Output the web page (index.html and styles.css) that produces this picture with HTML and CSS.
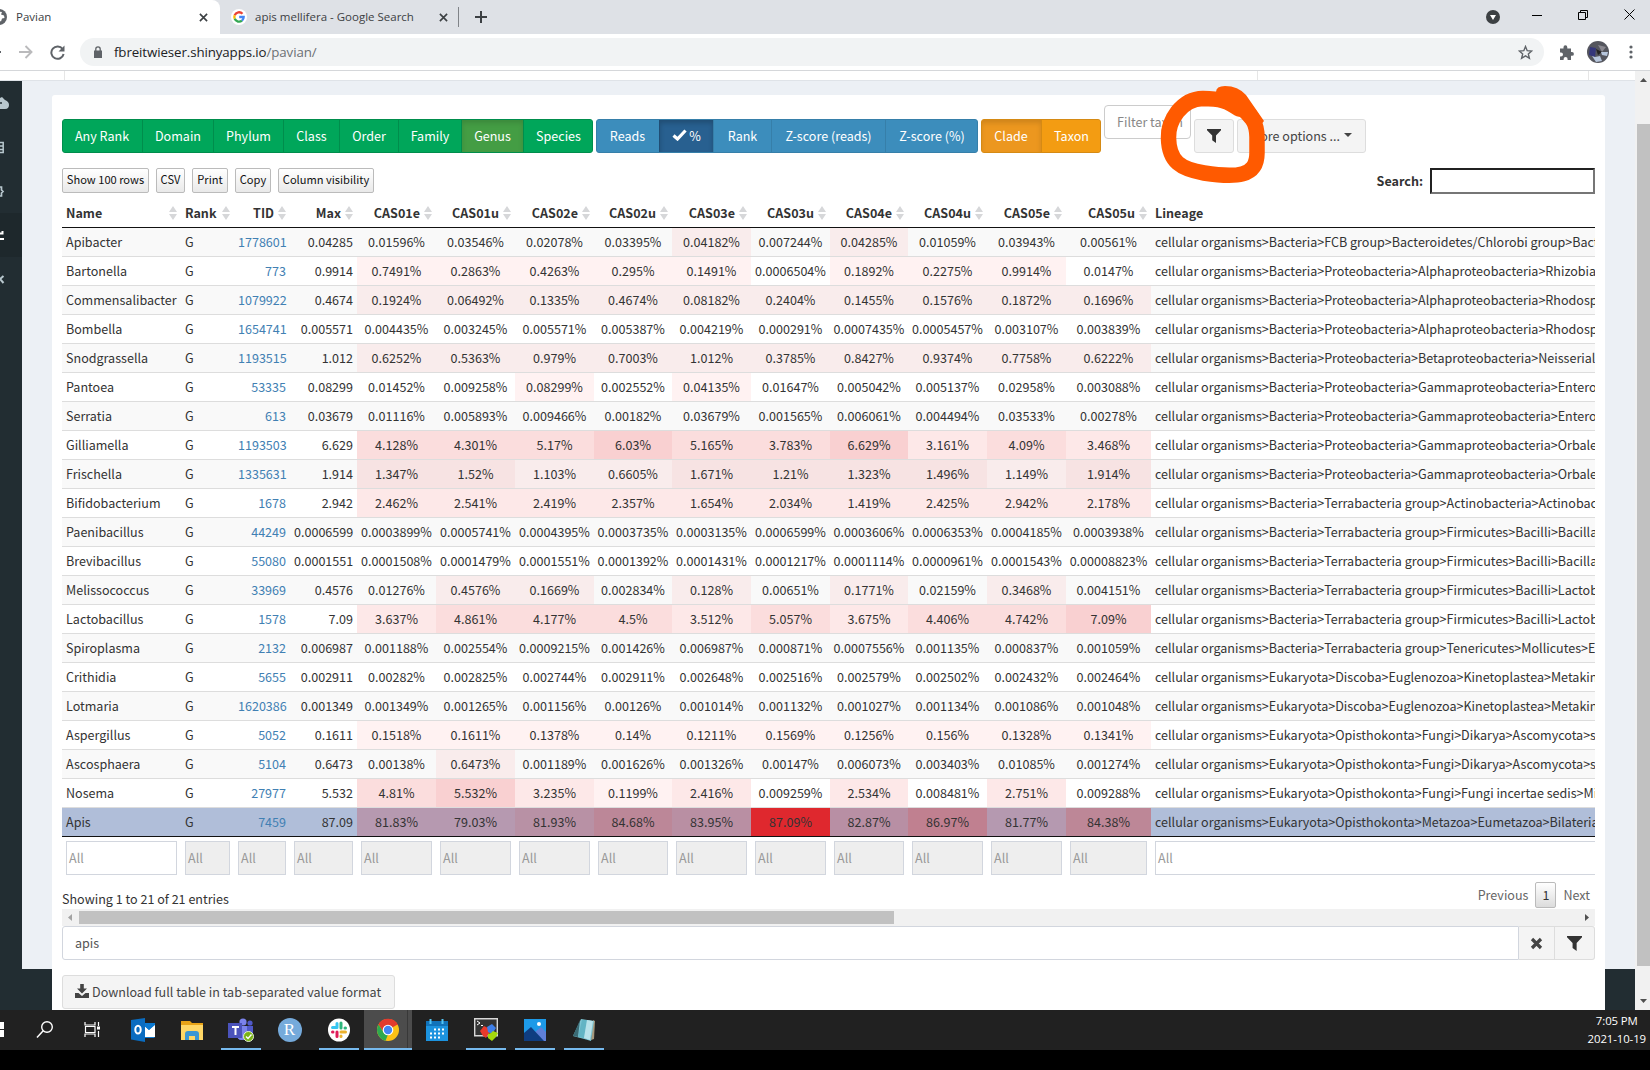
FILE: index.html
```html
<!DOCTYPE html>
<html lang="en">
<head>
<meta charset="utf-8">
<title>Pavian</title>
<link rel="stylesheet" href="styles.css">
</head>
<body>
<svg class="defs" width="0" height="0">
  <symbol id="funnel" viewBox="0 0 14 14"><path d="M0 0h14v1.2L9 6.6V14L5.2 11.2V6.6L0 1.2z" fill="currentColor"/></symbol>
  <symbol id="cross" viewBox="0 0 10 10"><path d="M1 1l8 8M9 1L1 9" stroke="currentColor" stroke-width="1.8" fill="none"/></symbol>
</svg>
<div class="screen">
  <header class="tabs">
    <div class="tab tab-active">
      <svg class="globe" width="16" height="16" viewBox="0 0 16 16"><circle cx="8" cy="8" r="8" fill="#5f6368"/><path d="M8 2.500l3 .5-1 2.500 3 1 .500 2.500-2.500.5-1 3-3-1.500-2-3 2-2z" fill="#fff"/></svg>
      <span class="tab-title title-a">Pavian</span>
      <svg class="tab-x" width="9" height="9"><use href="#cross"/></svg>
    </div>
    <div class="tab tab-google">
      <svg width="16" height="16" viewBox="0 0 16 16"><circle cx="8" cy="8" r="8" fill="#fff"/><g fill="none" stroke-width="2.3"><path d="M3.7 6.2A4.7 4.7 0 0 1 11.5 4.8" stroke="#ea4335"/><path d="M3.7 6.2a4.7 4.7 0 0 0 0 3.6" stroke="#fbbc05"/><path d="M3.7 9.8A4.7 4.7 0 0 0 11 11.6" stroke="#34a853"/><path d="M11 11.6A4.7 4.7 0 0 0 12.7 8H8.2" stroke="#4285f4"/></g></svg>
      <span class="tab-title title-b">apis mellifera - Google Search</span>
      <svg class="tab-x" width="9" height="9"><use href="#cross"/></svg>
    </div>
    <span class="tab-sep"></span>
    <svg class="plus" width="12" height="12"><path d="M6 0v12M0 6h12" stroke="#3c4043" stroke-width="2"/></svg>
    <div class="win">
      <svg width="14" height="14" viewBox="0 0 14 14"><circle cx="7" cy="7" r="7" fill="#3c4043"/><path d="M4 5h6L7 10z" fill="#fff"/></svg>
      <svg width="10" height="10"><path d="M0 5.5h10" stroke="#000"/></svg>
      <svg width="10" height="10"><path d="M.5 2.5h7v7h-7zM2.500 2.500v-2h7v7h-2" fill="none" stroke="#000"/></svg>
      <svg width="11" height="11"><path d="M.5.5l10 10M10.500.5l-10 10" stroke="#000"/></svg>
    </div>
  </header>
  <nav class="addressbar">
    <svg class="back" width="8" height="14"><path d="M0 7h1" stroke="#5f6368" stroke-width="2"/></svg>
    <svg class="fwd" width="14" height="14" viewBox="0 0 14 14"><path d="M0 7h12M6.500 1l6 6-6 6" fill="none" stroke="#bababc" stroke-width="1.900"/></svg>
    <svg class="reload" width="15" height="15" viewBox="0 0 15 15"><path d="M12.600 4A6.200 6.200 0 1 0 13.600 9" fill="none" stroke="#5f6368" stroke-width="2"/><path d="M14.500.5v6h-6z" fill="#5f6368"/></svg>
    <div class="omnibox">
      <svg width="8" height="12" viewBox="0 0 8 12"><path d="M0 4.500h8V12H0z" fill="#5f6368"/><path d="M1.800 5V3a2.200 2.200 0 0 1 4.400 0v2" fill="none" stroke="#5f6368" stroke-width="1.300"/></svg>
      <span class="url">fbreitwieser.shinyapps.io<i>/pavian/</i></span>
      <svg class="star" width="15" height="15" viewBox="0 0 15 15"><path d="M7.500 1.500l1.700 4.200 4.500.3-3.400 2.900 1.100 4.400-3.900-2.400-3.900 2.400 1.100-4.400L1.300 6l4.500-.3z" fill="none" stroke="#5f6368" stroke-width="1.400"/></svg>
    </div>
    <svg class="puzzle" width="15" height="15" viewBox="0 0 15 15"><path d="M1 3.500h3.500v-1.300a1.900 1.900 0 0 1 3.800 0v1.300H12v3.500h1a1.900 1.900 0 0 1 0 3.800h-1V15H8.600v-1a2 2 0 0 0-4 0v1H1v-3.600h1a2 2 0 0 0 0-4H1z" fill="#5f6368"/></svg>
    <svg class="avatar" width="22" height="22" viewBox="0 0 22 22"><circle cx="11" cy="11" r="11" fill="#55565e"/><path d="M3 6l6 1-1 9-6-2z" fill="#34367a"/><path d="M11 4l8 2-4 5z" fill="#8a8890"/><path d="M9 8l6 3-4 3z" fill="#222"/><path d="M14 11h7l-1 4-5-1zM5 15l3 1 5-1 2 5-6 1z" fill="#b7c6dc"/></svg>
    <svg class="dots" width="4" height="14"><circle cx="2" cy="2" r="1.600"/><circle cx="2" cy="7" r="1.600"/><circle cx="2" cy="12" r="1.600"/></svg>
  </nav>

  <div class="page">
    <div class="view">
      <div class="topstrip"><span class="ts-a"></span><span class="ts-b"></span><span class="ts-c"></span></div>
      <div class="body">
        <aside class="sidebar">
          <div class="side"><svg width="9" height="13"><path d="M0 1l2-1 3 3c3 1 4 3 4 5s-1 4-4 4H0z" fill="#b8c7ce"/><circle cx="1" cy="6" r="1" fill="#222d32"/></svg></div>
          <div class="side"><svg width="9" height="13"><path d="M0 1.500h3.200v10H0M0 5h3M0 8.500h3" fill="none" stroke="#b8c7ce" stroke-width="1.500"/></svg></div>
          <div class="side"><svg width="9" height="13"><path d="M0 2h1.500v3L3 6.500 1.500 8v3H0" fill="none" stroke="#b8c7ce" stroke-width="1.700"/></svg></div>
          <div class="side side-on"><svg width="9" height="13"><path d="M0 4.500h2.500V2M0 10h4" fill="none" stroke="#fff" stroke-width="2"/></svg></div>
          <div class="side"><svg width="9" height="13"><path d="M3.500 3L0 6l3.500 4" fill="none" stroke="#b8c7ce" stroke-width="2"/></svg></div>
        </aside>
        <main class="content">
          <section class="box">
            <div class="toolbar">
              <div class="group green">
                <button style="width:80px">Any Rank</button><button style="width:71px">Domain</button><button style="width:70px">Phylum</button><button style="width:56px">Class</button><button style="width:59px">Order</button><button style="width:63px">Family</button><button class="on" style="width:62px">Genus</button><button style="width:70px">Species</button>
              </div>
              <div class="group blue">
                <button style="width:63px">Reads</button><button class="on" style="width:54px"><svg width="15" height="12" viewBox="0 0 15 12"><path d="M1.500 6.500l4 3.500L13.500 1.500" fill="none" stroke="#fff" stroke-width="3.200"/></svg>%</button><button style="width:58px">Rank</button><button style="width:114px">Z-score (reads)</button><button style="width:93px">Z-score (%)</button>
              </div>
              <div class="group orange">
                <button class="on" style="width:60px">Clade</button><button style="width:60px">Taxon</button>
              </div>
              <div class="filterbox">Filter taxon</div>
              <button class="plain funnel-btn"><svg width="14" height="14"><use href="#funnel"/></svg></button>
              <button class="plain more">More options ... <svg width="8" height="4"><path d="M0 0h8L4 4z" fill="#444"/></svg></button>
            </div>
            <div class="dt-top">
              <button class="dt" style="width:87px">Show 100 rows</button><button class="dt" style="width:29px">CSV</button><button class="dt" style="width:36px">Print</button><button class="dt" style="width:36px">Copy</button><button class="dt" style="width:96px">Column visibility</button>
              <label class="search">Search:<input type="text"></label>
            </div>
            <div class="scroller">
              <table class="taxa">
                <colgroup id="cols"></colgroup>
                <thead id="head"></thead>
                <tbody id="rows"></tbody>
                <tfoot id="foot"></tfoot>
              </table>
            </div>
            <div class="dt-foot">
              <span class="info">Showing 1 to 21 of 21 entries</span>
              <div class="pager"><span>Previous</span><b>1</b><span>Next</span></div>
            </div>
            <div class="hbar"><svg width="17" height="17"><path d="M10 5v7L6 8.500z" fill="#a3a3a3"/></svg><span class="hthumb"></span><svg class="hright" width="17" height="17"><path d="M7 5v7l4-3.500z" fill="#505050"/></svg></div>
            <div class="query"><div class="qtext">apis</div><button class="qx"><svg width="13" height="13" viewBox="0 0 13 13"><path d="M2 2l9 9M11 2l-9 9" stroke="#444" stroke-width="3.200"/></svg></button><button class="qf"><svg width="15" height="15"><use href="#funnel"/></svg></button></div>
            <button class="plain download"><svg width="14" height="14" viewBox="0 0 14 14"><path d="M5.200 0h3.600v4.500H12L7 9.500 2 4.500h3.200zM0 9h3.500L7 12l3.500-3H14v5H0z" fill="#444"/></svg>Download full table in tab-separated value format</button>
          </section>
        </main>
      </div>
    </div>
    <div class="vbar"><svg width="15" height="18"><path d="M5 11h7L8.500 7z" fill="#505050"/></svg><span class="vthumb"></span><svg class="vdown" width="15" height="17"><path d="M5 6h7l-3.500 4z" fill="#505050"/></svg></div>
  </div>

  <footer class="taskbar">
    <div class="task start"><svg width="24" height="24"><path d="M12 4h4v7h-4zM12 12h4v7h-4z" fill="#fff"/></svg></div>
    <div class="task"><svg width="24" height="24" viewBox="0 0 24 24"><circle cx="14" cy="9" r="5.300" fill="none" stroke="#fff" stroke-width="1.400"/><path d="M10.200 12.800L4 19.500" stroke="#fff" stroke-width="1.500"/></svg></div>
    <div class="task"><svg width="24" height="24" viewBox="0 0 24 24"><path d="M3 4v3h10V4M3 19v-3h10v3M3.500 8.500h9.500v6H3.500zM16.500 4v4M16.500 13v6" fill="none" stroke="#fff" stroke-width="1.200"/><path d="M15 8.500h3v3h-3z" fill="#fff"/></svg></div>
    <div class="task"><svg width="24" height="24" viewBox="0 0 24 24"><path d="M12 5h12v14H12z" fill="#fff"/><path d="M12 7l6 5 6-6v-1H12zM12 19l12 0-1 1H12z" fill="#0a78d0"/><path d="M0 2l14-2v24L0 21.500z" fill="#0a6cc0"/><ellipse cx="7" cy="11.700" rx="2.700" ry="3.900" fill="none" stroke="#fff" stroke-width="2"/><path d="M14 7l4 4 6-5" fill="none" stroke="#0a78d0" stroke-width="1.500"/></svg></div>
    <div class="task"><svg width="24" height="24" viewBox="0 0 24 24"><path d="M1 3h9l2 2h11v17H1z" fill="#e8a317"/><path d="M1 7h22v15H1z" fill="#ffd766"/><path d="M5 22v-6q0-3 3-3h8q3 0 3 3v6h-4v-4H9v4z" fill="#3b97d3"/></svg></div>
    <div class="task run"><svg width="26" height="24" viewBox="0 0 26 24"><circle cx="15" cy="4" r="3.600" fill="#7b83eb"/><circle cx="22" cy="5" r="2.600" fill="#5059c9"/><path d="M9 8h16v8q0 4-4 4h-2q-2 2-5 2-5 0-5-6z" fill="#5059c9"/><path d="M9 8h10v9q0 5-5 5t-5-5z" fill="#7b83eb"/><path d="M0 5h14v15H0z" fill="#4b53bc"/><path d="M4 9h7M7.500 9v8" stroke="#fff" stroke-width="2"/><circle cx="20.500" cy="18.500" r="5" fill="#7ab317" stroke="#e6f2d0"/><path d="M18 18.500l2 2 3.500-4" fill="none" stroke="#fff" stroke-width="1.400"/></svg></div>
    <div class="task"><span class="rstudio">R</span></div>
    <div class="task run"><svg width="22" height="24" viewBox="0 0 22 24"><ellipse cx="11" cy="12" rx="11" ry="11.500" fill="#fff"/><g stroke-width="3" stroke-linecap="round"><path d="M9 5.500v4M4.500 9.500h4.500" stroke="#36c5f0"/><path d="M13 5v5M17.500 10h-.5" stroke="#2eb67d"/><path d="M13 14h4.500M13 18v.5" stroke="#ecb22e"/><path d="M9 14v4.500M4.500 14h.5" stroke="#e01e5a"/></g></svg></div>
    <div class="task run active"><svg width="24" height="24" viewBox="0 0 24 24"><circle cx="12" cy="12" r="11" fill="#fbc116"/><path d="M12 12L2.500 6.500A11 11 0 0 1 21.500 6.500z" fill="#e33b2e"/><path d="M12 7H22A11 11 0 0 0 2.500 6.500L7.500 14z" fill="#e33b2e"/><path d="M2.500 6.500l5.200 8 4.300 2-2.500 6.200A11 11 0 0 1 2.500 6.500z" fill="#2da94f"/><circle cx="12" cy="12" r="5.300" fill="#fff"/><circle cx="12" cy="12" r="4.200" fill="#4285f4"/></svg></div>
    <div class="task"><svg width="24" height="24" viewBox="0 0 24 24"><path d="M1 3h22v20H1z" fill="#1c93df"/><path d="M1 3h22v5H1z" fill="#1173ba"/><path d="M5.500 1v5M17.500 1v5" stroke="#54c5f5" stroke-width="2"/><path d="M9 11.500h11M5 15.500h15M5 19.500h11" stroke="#fff" stroke-width="2" stroke-dasharray="2 2"/></svg></div>
    <div class="task run"><svg width="24" height="24" viewBox="0 0 24 24"><path d="M.7.700h22.600v17H.7z" fill="#333" stroke="#d8d8d8" stroke-width="1.400"/><path d="M3 3l3 2-3 2M7 7.500h2" fill="none" stroke="#fff"/><path d="M6 13l4-5 4 2 2 4-4 6-3-2z" fill="#e8392b"/><path d="M13 9l5-3 4 4-4 6-4-2z" fill="#3f7fe8"/><path d="M14 16l3-1 2-2 5 2-2 4-4 4-4-3z" fill="#a4d80c"/></svg></div>
    <div class="task run"><svg width="24" height="24" viewBox="0 0 24 24"><path d="M1 1h22v22H1z" fill="#1d9ae8"/><path d="M12 14l6-5 5 5v9H9z" fill="#5f7fd8"/><path d="M1 15l7-6 13 14H1z" fill="#0f3d80"/><circle cx="16" cy="6" r="2" fill="#fff"/></svg></div>
    <div class="task run"><svg width="24" height="24" viewBox="0 0 24 24"><path d="M21 2l2 1-1 18-3 1z" fill="#a6997d"/><path d="M9 1l13 2-3 20-5-1.500L1 18z" fill="#7cc3d1"/><path d="M8 2L1 18l5 1z" fill="#3a6a74"/><path d="M10 2h5L12 20l-6-1z" fill="#63b4c4"/><path d="M15 2l6 1-3 19-6-2z" fill="#b9e2ea"/></svg></div>
    <div class="clock"><span>7:05 PM</span><span>2021-10-19</span></div>
  </footer>
  <svg class="scribble" width="120" height="110" viewBox="1150 80 120 110"><path d="M1239 109C1228 101 1220 98.500 1203 98.500C1181 99 1168 121 1168.500 138C1169 162 1181 169 1204 173C1236 178 1257 177 1257 153V137C1257 120 1248 113 1240 103" fill="none" stroke="#ff5a00" stroke-width="15.500" stroke-linejoin="round" stroke-linecap="round"/><path d="M1216 92q0-6 9-6 13 0 21 9l18 26-10 12-13-15-15-14z" fill="#ff5a00"/></svg>
</div>
<script src="table.js"></script>
</body>
</html>
```
FILE: styles.css
```css
* { box-sizing: border-box; }
body { margin: 0; background: #000; font-family: "Noto Sans CJK SC", "Noto Sans", sans-serif; font-size: 12.55px; color: #333; }
button, input { font: inherit; color: inherit; margin: 0; padding: 0; }
svg { display: block; flex: none; }
.defs { position: absolute; }
.screen { position: relative; width: 1650px; height: 1070px; overflow: hidden; display: flex; flex-direction: column; background: #000; }

/* browser frame */
.tabs { height: 34px; flex: none; display: flex; align-items: center; background: #dee1e6; font-family: "Open Sans", sans-serif; font-size: 11.5px; color: #3c4043; }
.tab { height: 34px; display: flex; align-items: center; }
.tab-active { width: 220px; background: #fff; border-radius: 0 8px 0 0; }
.globe { margin-left: -9px; }
.tab-title { white-space: nowrap; position: relative; top: -1px; }
.title-a { margin-left: 9px; width: 183px; }
.tab-google { width: 238px; padding-left: 11px; }
.title-b { margin-left: 8px; width: 184px; }
.tab-x { color: #3c4043; }
.tab-sep { width: 1px; height: 20px; background: #808388; }
.plus { margin-left: 16px; }
.win { margin-left: auto; display: flex; align-items: center; padding: 0 15px 5px 0; }
.win svg:nth-child(1) { margin-top: 5px; margin-right: 32px; }
.win svg:nth-child(2), .win svg:nth-child(3) { margin-right: 36px; }
.addressbar { height: 37px; flex: none; display: flex; align-items: center; background: #fff; border-bottom: 1px solid #d5d7da; }
.fwd { margin-left: 11px; }
.reload { margin-left: 17px; }
.omnibox { margin-left: 15px; width: 1464px; height: 28px; border-radius: 14px; background: #f1f3f4; display: flex; align-items: center; padding: 0 11px 0 14px; }
.url { margin-left: 12px; font: 13.3px "Open Sans", sans-serif; color: #202124; letter-spacing: -.1px; }
.url i { font-style: normal; color: #6c7075; }
.star { margin-left: auto; }
.puzzle { margin-left: 15px; }
.avatar { margin-left: 13px; }
.dots { margin-left: 20px; fill: #5f6368; }

/* page */
.page { height: 939px; flex: none; display: flex; }
.view { width: 1635px; display: flex; flex-direction: column; }
.topstrip { height: 10px; flex: none; background: #fff; border-bottom: 1px solid #dfe3e8; display: flex; }
.topstrip span { border-right: 1px solid #e6e6e6; }
.ts-a { width: 65px; }
.ts-b { width: 1193px; }
.ts-c { width: 331px; }
.body { flex: 1; display: flex; min-height: 0; }
.sidebar { width: 22px; flex: none; background: #222d32; }
.side { height: 44px; display: flex; align-items: center; }
.side-on { background: #1e282c; }
.content { flex: 1; min-width: 0; padding: 14px 30px 0; background: linear-gradient(#ecf0f5 888px, #222d32 888px); }
.box { height: 915px; background: #fff; border-radius: 3px 3px 0 0; padding: 10px 10px 0; overflow: hidden; }
.vbar { width: 15px; background: #f1f1f1; display: flex; flex-direction: column; }
.vthumb { margin: 35px 0 0 2px; height: 842px; background: #c1c1c1; }
.vdown { margin-top: auto; }

.toolbar { height: 48px; display: flex; gap: 3px; align-items: flex-end; }
.group { display: flex; height: 34px; border-radius: 3px; overflow: hidden; border: 1px solid; }
.group button { height: 32px; padding-bottom: 2px; border: 0; border-left: 1px solid; color: #fff; white-space: nowrap; display: flex; align-items: center; justify-content: center; gap: 2px; }
.group button:first-child { border-left: 0; margin-left: -1px; }
.group button:last-child { margin-right: -1px; }
.green, .green button { background: #00a65a; border-color: #008d4c; }
.green .on { background: #449d44; box-shadow: inset 0 3px 5px rgba(0,0,0,.125); }
.blue, .blue button { background: #3c8dbc; border-color: #367fa9; }
.blue .on { background: #286090; border-color: #204d74; box-shadow: inset 0 3px 5px rgba(0,0,0,.2); }
.orange, .orange button { background: #f39c12; border-color: #d58a14; }
.orange .on { background: #ec971f; box-shadow: inset 0 3px 5px rgba(0,0,0,.125); }
.filterbox { align-self: flex-start; width: 87px; height: 34px; border: 1px solid #ccc; border-radius: 4px; padding-left: 12px; line-height: 32px; color: #888; overflow: hidden; white-space: nowrap; }
.plain { height: 34px; padding-bottom: 2px; background: #f4f4f4; border: 1px solid #ddd; border-radius: 3px; color: #444; display: flex; align-items: center; white-space: nowrap; }
.funnel-btn { width: 40px; padding-bottom: 0; justify-content: center; color: #333; }
.more { width: 129px; padding-left: 12px; }
.more svg { margin-left: 4px; }

.dt-top { margin-top: 15px; height: 26px; display: flex; align-items: flex-start; gap: 7px; }
.dt { height: 25px; padding-bottom: 2px; border: 1px solid #bbb; border-radius: 2px; background: linear-gradient(#fff, #e9e9e9); color: #111; font-size: 11.1px; line-height: 21px; white-space: nowrap; }
.search { margin-left: auto; display: flex; align-items: center; gap: 7px; font-weight: 700; line-height: 26px; }
.search input { width: 165px; height: 26px; border: 2px inset #767676; background: #fff; }

.scroller { margin-top: 6px; height: 679px; overflow: hidden; }
.taxa { table-layout: fixed; width: 1838px; border-collapse: separate; border-spacing: 0; white-space: nowrap; }
.taxa th { height: 28px; padding: 0 17px 2px 4px; text-align: right; border-bottom: 1px solid #111; font-weight: 700; line-height: 25px; }
.taxa th div { display: flex; align-items: center; justify-content: flex-end; gap: 4px; margin-right: -13px; }
.taxa th.left div { justify-content: space-between; }
.taxa td { height: 29px; padding: 0 4px; line-height: 28px; border-top: 1px solid #ddd; }
.taxa tbody tr:first-child td { height: 28px; border-top: 0; }
.taxa tbody tr:nth-child(odd) td { background-color: #f9f9f9; }
.taxa tbody tr:last-child td { background-color: #b0bed9; height: 30px; border-bottom: 1px solid #111; }
.taxa .num { text-align: right; }
.taxa .tid { color: #4180b3; }
.taxa .pct { text-align: center; padding: 0; }
.taxa tbody tr .l1 { background-color: #fff2f2; }
.taxa tbody tr .l2 { background-color: #fde8e8; }
.taxa tbody tr .l3 { background-color: #fbdddd; }
.taxa tbody tr .l4 { background-color: #f9d0d1; }
.taxa tbody tr:nth-child(odd) .l1 { background-color: #f9ecec; }
.taxa tbody tr:nth-child(odd) .l2 { background-color: #f7e3e3; }
.taxa tfoot td { border: 0; height: 42px; }
.taxa tfoot div { height: 34px; border: 1px solid #d2d6de; background: #eee; color: #999; padding-left: 2px; line-height: 32px; }
.taxa tfoot .text div { background: #fff; }

.dt-foot { height: 30px; display: flex; }
.info { line-height: 40px; }
.pager { margin: 3px 5px 0 auto; height: 26px; display: flex; line-height: 26px; color: #666; gap: 7px; }
.pager b { font-weight: 400; width: 21px; border: 1px solid #bbb; border-radius: 2px; background: linear-gradient(#fff, #dcdcdc); color: #333; text-align: center; line-height: 24px; }
.hbar { height: 17px; background: #f1f1f1; display: flex; align-items: center; }
.hthumb { width: 815px; height: 13px; background: #c1c1c1; }
.hright { margin-left: auto; }
.query { height: 34px; display: flex; }
.qtext { width: 1457px; border: 1px solid #d2d6de; border-radius: 3px 0 0 3px; padding-left: 12px; line-height: 32px; color: #555; }
.query button { border: 1px solid #ddd; border-left: 0; background: #f4f4f4; display: flex; align-items: center; justify-content: center; color: #333; }
.qx { width: 36px; }
.qf { width: 40px; border-radius: 0 3px 3px 0; }
.download { margin-top: 15px; width: 333px; padding-left: 12px; gap: 3px; }

/* taskbar */
.taskbar { height: 40px; flex: none; display: flex; background: #212121; }
.task { width: 49px; height: 40px; display: flex; align-items: center; justify-content: center; background-repeat: no-repeat; background-position: 5px 38px; }
.start { width: 20px; justify-content: flex-start; }
.start svg { margin-left: -12px; }
.task.run { background-image: linear-gradient(#76b9ed, #76b9ed); background-size: 40px 2px; }
.task.active { background-image: linear-gradient(#76b9ed, #76b9ed), linear-gradient(#383838, #383838), linear-gradient(#4c4c4c, #4c4c4c); background-size: 48px 2px, 1px 40px, 48px 40px; background-position: 1px 38px, 44px 0, 1px 0; }
.rstudio { width: 24px; height: 24px; border-radius: 50%; background: #75aadb; color: #fff; text-align: center; font: 17px/24px "Liberation Serif", serif; }
.clock { margin-left: auto; padding: 2px 4px 0 0; display: flex; flex-direction: column; font: 11.4px/18px "Open Sans", sans-serif; color: #fff; text-align: center; letter-spacing: -.1px; }
.scribble { position: absolute; left: 1150px; top: 80px; }
```
FILE: table.js
```js
const widths = [119, 53, 56, 67, 79, 79, 79, 78, 79, 79, 78, 79, 79, 85, 749];
const names = ["Name", "Rank", "TID", "Max", "CAS01e", "CAS01u", "CAS02e", "CAS02u", "CAS03e", "CAS03u", "CAS04e", "CAS04u", "CAS05e", "CAS05u", "Lineage"];
const B = "cellular organisms>Bacteria>", P = B + "Proteobacteria>", T = B + "Terrabacteria group>", E = "cellular organisms>Eukaryota>", O = E + "Opisthokonta>";
const data = [
  ["Apibacter", 1778601, "0.04285", "0.01596 0.03546 0.02078 0.03395 0.04182 0.007244 0.04285 0.01059 0.03943 0.00561", B + "FCB group>Bacteroidetes/Chlorobi group>Bacteroidetes"],
  ["Bartonella", 773, "0.9914", "0.7491 0.2863 0.4263 0.295 0.1491 0.0006504 0.1892 0.2275 0.9914 0.0147", P + "Alphaproteobacteria>Rhizobiales"],
  ["Commensalibacter", 1079922, "0.4674", "0.1924 0.06492 0.1335 0.4674 0.08182 0.2404 0.1455 0.1576 0.1872 0.1696", P + "Alphaproteobacteria>Rhodospirillales"],
  ["Bombella", 1654741, "0.005571", "0.004435 0.003245 0.005571 0.005387 0.004219 0.000291 0.0007435 0.0005457 0.003107 0.003839", P + "Alphaproteobacteria>Rhodospirillales"],
  ["Snodgrassella", 1193515, "1.012", "0.6252 0.5363 0.979 0.7003 1.012 0.3785 0.8427 0.9374 0.7758 0.6222", P + "Betaproteobacteria>Neisseriales"],
  ["Pantoea", 53335, "0.08299", "0.01452 0.009258 0.08299 0.002552 0.04135 0.01647 0.005042 0.005137 0.02958 0.003088", P + "Gammaproteobacteria>Enterobacterales"],
  ["Serratia", 613, "0.03679", "0.01116 0.005893 0.009466 0.00182 0.03679 0.001565 0.006061 0.004494 0.03533 0.00278", P + "Gammaproteobacteria>Enterobacterales"],
  ["Gilliamella", 1193503, "6.629", "4.128 4.301 5.17 6.03 5.165 3.783 6.629 3.161 4.09 3.468", P + "Gammaproteobacteria>Orbales"],
  ["Frischella", 1335631, "1.914", "1.347 1.52 1.103 0.6605 1.671 1.21 1.323 1.496 1.149 1.914", P + "Gammaproteobacteria>Orbales"],
  ["Bifidobacterium", 1678, "2.942", "2.462 2.541 2.419 2.357 1.654 2.034 1.419 2.425 2.942 2.178", T + "Actinobacteria>Actinobacteria"],
  ["Paenibacillus", 44249, "0.0006599", "0.0003899 0.0005741 0.0004395 0.0003735 0.0003135 0.0006599 0.0003606 0.0006353 0.0004185 0.0003938", T + "Firmicutes>Bacilli>Bacillales"],
  ["Brevibacillus", 55080, "0.0001551", "0.0001508 0.0001479 0.0001551 0.0001392 0.0001431 0.0001217 0.0001114 0.0000961 0.0001543 0.00008823", T + "Firmicutes>Bacilli>Bacillales"],
  ["Melissococcus", 33969, "0.4576", "0.01276 0.4576 0.1669 0.002834 0.128 0.00651 0.1771 0.02159 0.3468 0.004151", T + "Firmicutes>Bacilli>Lactobacillales"],
  ["Lactobacillus", 1578, "7.09", "3.637 4.861 4.177 4.5 3.512 5.057 3.675 4.406 4.742 7.09", T + "Firmicutes>Bacilli>Lactobacillales"],
  ["Spiroplasma", 2132, "0.006987", "0.001188 0.002554 0.0009215 0.001426 0.006987 0.000871 0.0007556 0.001135 0.000837 0.001059", T + "Tenericutes>Mollicutes>Entomoplasmatales"],
  ["Crithidia", 5655, "0.002911", "0.00282 0.002825 0.002744 0.002911 0.002648 0.002516 0.002579 0.002502 0.002432 0.002464", E + "Discoba>Euglenozoa>Kinetoplastea>Metakinetoplastina"],
  ["Lotmaria", 1620386, "0.001349", "0.001349 0.001265 0.001156 0.00126 0.001014 0.001132 0.001027 0.001134 0.001086 0.001048", E + "Discoba>Euglenozoa>Kinetoplastea>Metakinetoplastina"],
  ["Aspergillus", 5052, "0.1611", "0.1518 0.1611 0.1378 0.14 0.1211 0.1569 0.1256 0.156 0.1328 0.1341", O + "Fungi>Dikarya>Ascomycota>saccharomyceta"],
  ["Ascosphaera", 5104, "0.6473", "0.00138 0.6473 0.001189 0.001626 0.001326 0.00147 0.006073 0.003403 0.01085 0.001274", O + "Fungi>Dikarya>Ascomycota>saccharomyceta"],
  ["Nosema", 27977, "5.532", "4.81 5.532 3.235 0.1199 2.416 0.009259 2.534 0.008481 2.751 0.009288", O + "Fungi>Fungi incertae sedis>Microsporidia"],
  ["Apis", 7459, "87.09", "81.83 79.03 81.93 84.68 83.95 87.09 82.87 86.97 81.77 84.38", O + "Metazoa>Eumetazoa>Bilateria"]
];
const selected = ["#b699b0", "#b699b0", "#b891a5", "#bc8798", "#b98fa3", "#df282e", "#b88fa4", "#c08090", "#b599b0", "#bd8797"];
const sort = '<svg width="8" height="14"><path d="M4 0l4 6H0zM0 8h8l-4 6z" fill="#d6d7d9"/></svg>';

function level(v) {
  return v >= 5.5 ? "l4" : v >= 3.7 ? "l3" : v >= 1.2 ? "l2" : v >= 0.04 ? "l1" : "";
}

const el = id => document.getElementById(id);
el("cols").innerHTML = widths.map(w => `<col style="width:${w}px">`).join("");
el("head").innerHTML = "<tr>" + names.map((n, i) =>
  `<th class="${i < 2 || i === 14 ? "left" : ""}"><div><span>${n}</span>${i < 14 ? sort : ""}</div></th>`).join("") + "</tr>";
el("rows").innerHTML = data.map((r, k) => {
  const last = k === data.length - 1;
  const pct = r[3].split(" ").map((v, i) => last
    ? `<td class="pct" style="background-color:${selected[i]}">${v}%</td>`
    : `<td class="pct ${level(+v)}">${v}%</td>`).join("");
  return `<tr><td>${r[0]}</td><td>G</td><td class="num tid">${r[1]}</td><td class="num">${r[2]}</td>${pct}<td>${r[4].replace(/>/g, "&gt;")}</td></tr>`;
}).join("");
el("foot").innerHTML = "<tr>" + names.map((n, i) => `<td class="${i === 0 || i === 14 ? "text" : ""}"><div>All</div></td>`).join("") + "</tr>";
```
